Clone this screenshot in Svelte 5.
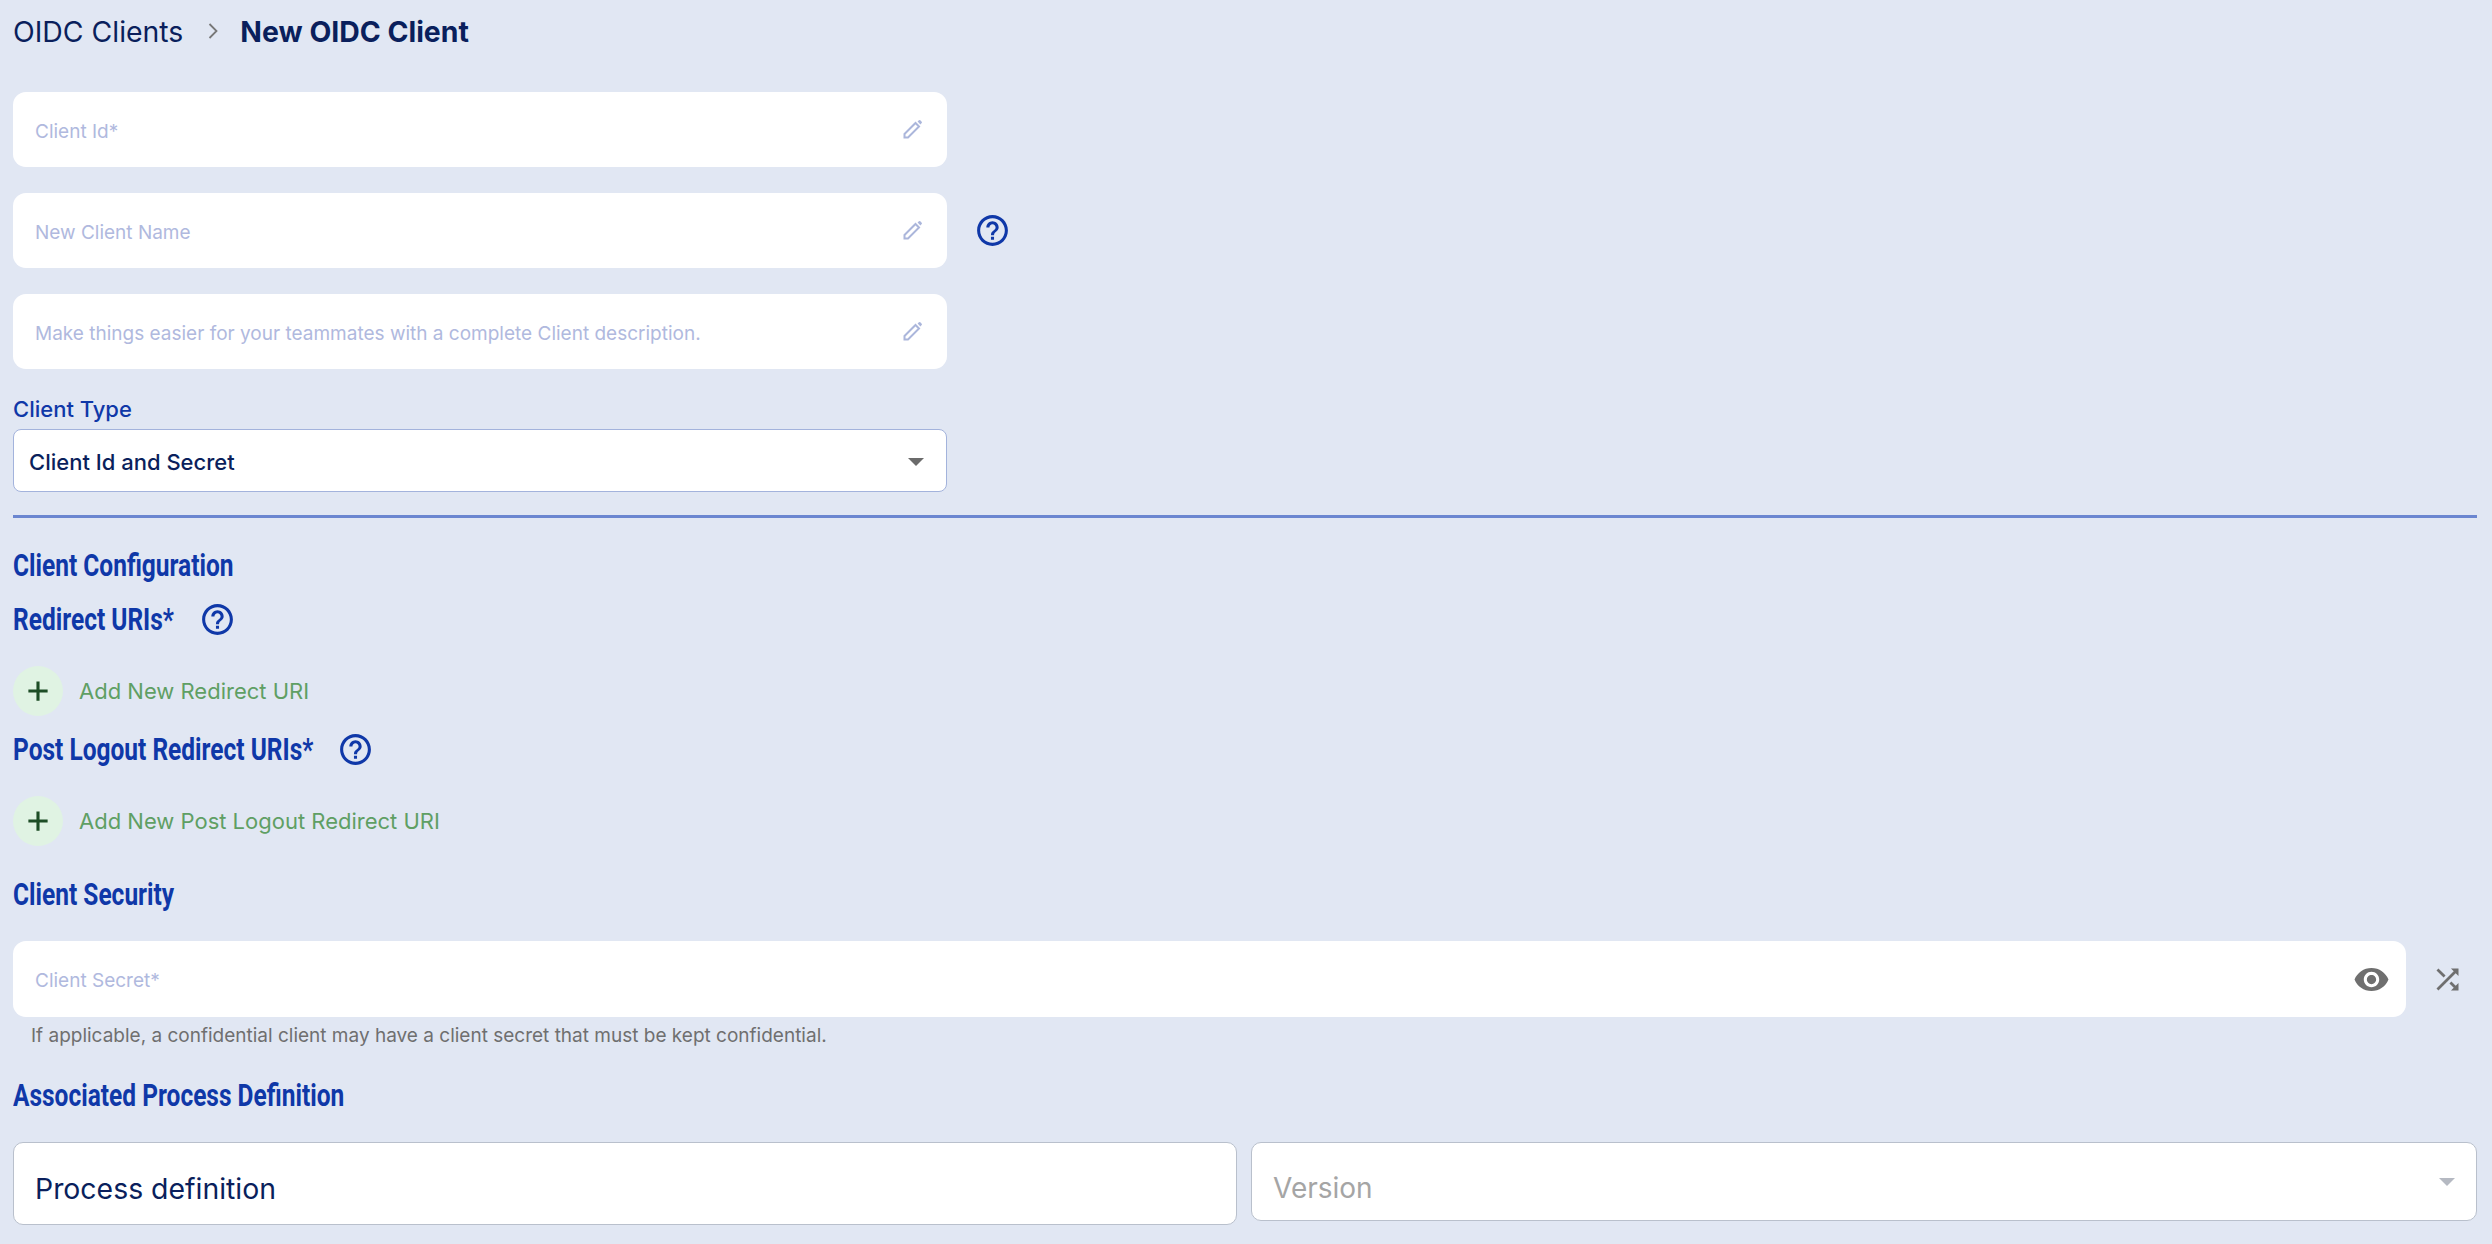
<script lang="ts">
	const helpPath =
		'M11 18h2v-2h-2v2zm1-16C6.48 2 2 6.48 2 12s4.48 10 10 10 10-4.48 10-10S17.52 2 12 2zm0 18c-4.41 0-8-3.59-8-8s3.59-8 8-8 8 3.59 8 8-3.59 8-8 8zm0-14c-2.21 0-4 1.79-4 4h2c0-1.1.9-2 2-2s2 .9 2 2c0 2-3 1.75-3 5h2c0-2.25 3-2.5 3-5 0-2.21-1.79-4-4-4z';

	const fields = [
		{ placeholder: 'Client Id*', help: false },
		{ placeholder: 'New Client Name', help: true },
		{ placeholder: 'Make things easier for your teammates with a complete Client description.', help: false }
	];
</script>

{#snippet helpIcon()}
	<svg class="help" viewBox="0 0 24 24" aria-hidden="true"><path d={helpPath} /></svg>
{/snippet}

{#snippet addRow(label: string)}
	<button class="add" type="button">
		<span class="add-circle">
			<svg viewBox="0 0 24 24" aria-hidden="true"><path d="M12 1.5v21M1.5 12h21" /></svg>
		</span>
		<span>{label}</span>
	</button>
{/snippet}

<main class="page">
	<nav class="crumbs">
		<span>OIDC Clients</span>
		<svg class="chevron" viewBox="0 0 12 18" aria-hidden="true"><path d="M2.5 2l7 7-7 7" /></svg>
		<strong>New OIDC Client</strong>
	</nav>

	<div class="fields">
		{#each fields as field}
			<div class="field-row">
				<div class="text-field">
					<input placeholder={field.placeholder} />
					<svg class="pencil" viewBox="0 0 20 20" aria-hidden="true">
						<path class="pencil-body" d="M1.5 18.5V15L12.5 4l3.5 3.5L5 18.5z" />
						<path class="pencil-cap" d="M14.6 2.6l1.3-1.3a1 1 0 0 1 1.4 0l1.4 1.4a1 1 0 0 1 0 1.4l-1.3 1.3z" />
					</svg>
				</div>
				{#if field.help}
					{@render helpIcon()}
				{/if}
			</div>
		{/each}
	</div>

	<div class="type-label">Client Type</div>
	<div class="select">
		<span>Client Id and Secret</span>
		<span class="caret"></span>
	</div>

	<hr />

	<h2 class="config"><span>Client Configuration</span></h2>
	<h2 class="with-help redirect"><span class="narrow redirect-text">Redirect URIs*</span>{@render helpIcon()}</h2>
	{@render addRow('Add New Redirect URI')}
	<h2 class="with-help logout"><span class="narrow logout-text">Post Logout Redirect URIs*</span>{@render helpIcon()}</h2>
	{@render addRow('Add New Post Logout Redirect URI')}

	<h2 class="security"><span>Client Security</span></h2>
	<div class="secret-row">
		<div class="text-field secret">
			<input placeholder="Client Secret*" />
			<svg class="eye" viewBox="0 0 24 24" aria-hidden="true">
				<path d="M12 4.5C7 4.5 2.73 7.61 1 12c1.73 4.39 6 7.5 11 7.5s9.27-3.11 11-7.5c-1.73-4.39-6-7.5-11-7.5zM12 17c-2.76 0-5-2.24-5-5s2.24-5 5-5 5 2.24 5 5-2.24 5-5 5zm0-8c-1.66 0-3 1.34-3 3s1.34 3 3 3 3-1.34 3-3-1.34-3-3-3z" />
			</svg>
		</div>
		<svg class="shuffle" viewBox="0 0 24 24" aria-hidden="true">
			<path d="M10.59 9.17L5.41 4 4 5.41l5.17 5.17 1.42-1.41zM14.5 4l2.04 2.04L4 18.59 5.41 20 17.96 7.46 20 9.5V4h-5.5zm.33 9.41l-1.41 1.41 3.13 3.13L14.5 20H20v-5.5l-2.04 2.04-3.13-3.13z" />
		</svg>
	</div>
	<p class="hint">If applicable, a confidential client may have a client secret that must be kept confidential.</p>

	<h2 class="process"><span>Associated Process Definition</span></h2>
	<div class="process-row">
		<div class="outlined process-box">Process definition</div>
		<div class="outlined version-box">
			<span>Version</span>
			<span class="caret light"></span>
		</div>
	</div>
</main>

<style>
	:global(body) {
		background: #e1e7f3;
		font-family: Inter, 'Liberation Sans', sans-serif;
		color: #0a1f5c;
	}
	.page {
		display: flex;
		flex-direction: column;
		align-items: stretch;
		padding: 0 15px 0 13px;
		height: 1244px;
		box-sizing: border-box;
		overflow: hidden;
	}
	.crumbs {
		display: flex;
		align-items: center;
		height: 62px;
		font-size: 28.4px;
	}
	.crumbs strong {
		font-weight: 700;
	}
	.chevron {
		width: 12px;
		height: 18px;
		margin: 0 21px 0 24px;
		fill: none;
		stroke: #777;
		stroke-width: 1.8;
	}
	.fields {
		display: flex;
		flex-direction: column;
		gap: 26px;
		margin-top: 30px;
	}
	.field-row {
		display: flex;
		align-items: center;
		gap: 27px;
	}
	.text-field {
		display: flex;
		align-items: center;
		width: 934px;
		height: 75px;
		flex-shrink: 0;
		padding: 0 24px 0 22px;
		box-sizing: border-box;
		background: #fff;
		border-radius: 13px;
	}
	input {
		flex: 1;
		min-width: 0;
		border: 0;
		outline: 0;
		padding: 0;
		margin-top: 3px;
		font: 19px Inter, 'Liberation Sans', sans-serif;
		background: transparent;
	}
	input::placeholder {
		color: #b0b9de;
		opacity: 1;
	}
	.pencil {
		width: 20px;
		height: 20px;
		margin-bottom: 2px;
		flex-shrink: 0;
	}
	.pencil-body {
		fill: none;
		stroke: #abb6db;
		stroke-width: 2;
	}
	.pencil-cap {
		fill: #abb6db;
	}
	.help {
		width: 37px;
		height: 37px;
		flex-shrink: 0;
		fill: #0f38a8;
	}
	.type-label {
		margin-top: 27px;
		font-size: 22px;
		font-weight: 500;
		line-height: 26px;
		color: #0f38a8;
	}
	.select {
		display: flex;
		align-items: center;
		justify-content: space-between;
		width: 934px;
		height: 63px;
		margin-top: 7px;
		padding: 2px 22px 0 15px;
		box-sizing: border-box;
		background: #fff;
		border: 1.5px solid #a3b3dc;
		border-radius: 8px;
		font-size: 22px;
		font-weight: 500;
	}
	.caret {
		width: 0;
		height: 0;
		border-left: 8px solid transparent;
		border-right: 8px solid transparent;
		border-top: 8px solid #6b6b6b;
	}
	.caret.light {
		margin-top: -12px;
		border-top-color: #b5b9c2;
	}
	hr {
		width: 100%;
		height: 3px;
		margin: 23px 0 0;
		border: 0;
		background: #6b86d0;
	}
	h2 {
		margin: 0;
		font-family: Roboto, 'Liberation Sans', sans-serif;
		font-size: 31px;
		font-weight: 700;
		line-height: 36px;
		color: #0f38a8;
		white-space: nowrap;
	}
	/* no condensed family is installed, so headings are squeezed horizontally */
	h2 span {
		display: inline-block;
		transform: scaleX(0.79);
		transform-origin: left center;
	}
	.config {
		margin-top: 30px;
	}
	.with-help {
		display: flex;
		align-items: center;
	}
	.redirect-text {
		width: 186px;
	}
	.logout-text {
		width: 324px;
	}
	.redirect {
		margin-top: 17px;
	}
	.logout {
		margin-top: 15px;
	}
	.add {
		display: flex;
		align-items: center;
		align-self: flex-start;
		gap: 16px;
		margin-top: 28px;
		padding: 0;
		border: 0;
		background: none;
		font: 22px Inter, 'Liberation Sans', sans-serif;
		color: #5f9f64;
	}
	.add-circle {
		display: flex;
		align-items: center;
		justify-content: center;
		width: 50px;
		height: 50px;
		border-radius: 50%;
		background: #e0f3e3;
	}
	.add-circle svg {
		width: 22px;
		height: 22px;
		fill: none;
		stroke: #1d4d26;
		stroke-width: 3.4;
	}
	.security {
		margin-top: 31px;
	}
	.secret-row {
		display: flex;
		align-items: center;
		gap: 25px;
		margin: 28px 13px 0 0;
	}
	.text-field.secret {
		flex: 1;
		height: 76px;
		padding-right: 16px;
	}
	.eye {
		width: 37px;
		height: 37px;
		fill: #6f6f6f;
	}
	.shuffle {
		width: 33px;
		height: 33px;
		flex-shrink: 0;
		fill: #6f6f6f;
	}
	.hint {
		margin: 6px 0 0 18px;
		font-size: 19px;
		line-height: 26px;
		color: #6f6f6f;
	}
	.process {
		margin-top: 29px;
	}
	.process-row {
		display: flex;
		align-items: flex-start;
		gap: 14px;
		margin-top: 28px;
	}
	.outlined {
		display: flex;
		align-items: center;
		padding: 0 21px;
		box-sizing: border-box;
		background: #fff;
		border: 1.5px solid #b9c0cc;
		border-radius: 10px;
		font-size: 28.4px;
	}
	.process-box {
		width: 1224px;
		height: 83px;
		padding-top: 9px;
	}
	.version-box {
		flex: 1;
		height: 79px;
		justify-content: space-between;
		color: #a5a5a5;
		padding-top: 13px;
		font-size: 28px;
	}
</style>
